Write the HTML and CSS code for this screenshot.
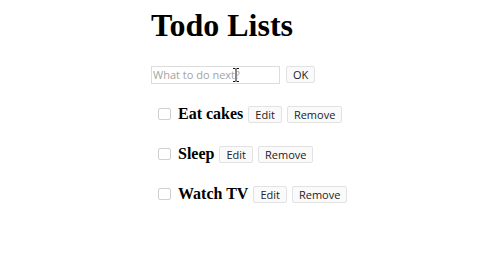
FILE: index.html
```html
<!DOCTYPE html>
<html>
<head>
<meta charset="utf-8">
<link rel="stylesheet" href="styles.css">
</head>
<body>
<div class="app">
  <h1 class="title">Todo Lists</h1>
  <form class="new-todo">
    <span class="field">
      <input class="text-input" type="text" placeholder="What to do next?">
      <svg class="cursor" width="8" height="16" viewBox="0 0 8 16"><path d="M1 1.5h2.2L4 2.4l.8-.9H7M4 2.4v11.2M1 14.5h2.2l.8-.9.8.9H7" fill="none" stroke="#fff" stroke-width="2.4"/><path d="M1 1.5h2.2L4 2.4l.8-.9H7M4 2.4v11.2M1 14.5h2.2l.8-.9.8.9H7" fill="none" stroke="#111" stroke-width="1"/></svg>
    </span>
    <button class="btn" type="button">OK</button>
  </form>
  <ul class="todos">
    <li class="todo"><input class="check" type="checkbox"><span class="label">Eat cakes</span><button class="btn" type="button">Edit</button><button class="btn" type="button">Remove</button></li>
    <li class="todo"><input class="check" type="checkbox"><span class="label">Sleep</span><button class="btn" type="button">Edit</button><button class="btn" type="button">Remove</button></li>
    <li class="todo"><input class="check" type="checkbox"><span class="label">Watch TV</span><button class="btn" type="button">Edit</button><button class="btn" type="button">Remove</button></li>
  </ul>
</div>
</body>
</html>
```
FILE: styles.css
```css
html, body {
  margin: 0;
  padding: 0;
  background: #ffffff;
}
.app {
  padding-left: 151px;
  padding-top: 6px;
}
.title {
  font-family: "Liberation Serif", serif;
  font-weight: bold;
  font-size: 32px;
  line-height: 38px;
  margin: 0;
  color: #000;
}
.new-todo {
  display: flex;
  align-items: center;
  gap: 6px;
  margin-top: 21px;
}
.field {
  position: relative;
  display: inline-block;
}
.text-input {
  box-sizing: border-box;
  width: 129px;
  height: 18px;
  margin: 0;
  padding: 0 1px;
  border: 1px solid #dcdcdc;
  font-family: "Open Sans", "Liberation Sans", sans-serif;
  font-size: 11px;
  color: #333;
  background: #fff;
  outline: none;
}
.text-input::placeholder {
  color: #a4a4a4;
}
.cursor {
  position: absolute;
  left: 81px;
  top: 2px;
}
.btn {
  box-sizing: border-box;
  height: 17px;
  margin: 0;
  padding: 0 6px;
  border: 1px solid #e2e2e2;
  border-radius: 2px;
  background: #fafafa;
  font-family: "Open Sans", "Liberation Sans", sans-serif;
  font-size: 11px;
  line-height: 15px;
  color: #222;
}
.todos {
  list-style: none;
  margin: 21px 0 0 0;
  padding: 0 0 0 7px;
  display: flex;
  flex-direction: column;
  gap: 21px;
}
.todo {
  display: flex;
  align-items: center;
  gap: 5px;
  height: 19px;
}
.check {
  box-sizing: border-box;
  width: 13px;
  height: 12px;
  margin: 0 2px 0 0;
  appearance: none;
  border: 1px solid #d0d0d0;
  border-radius: 2px;
  background: #fff;
}
.label {
  font-family: "Liberation Serif", serif;
  font-weight: bold;
  font-size: 16px;
  color: #000;
}
```
